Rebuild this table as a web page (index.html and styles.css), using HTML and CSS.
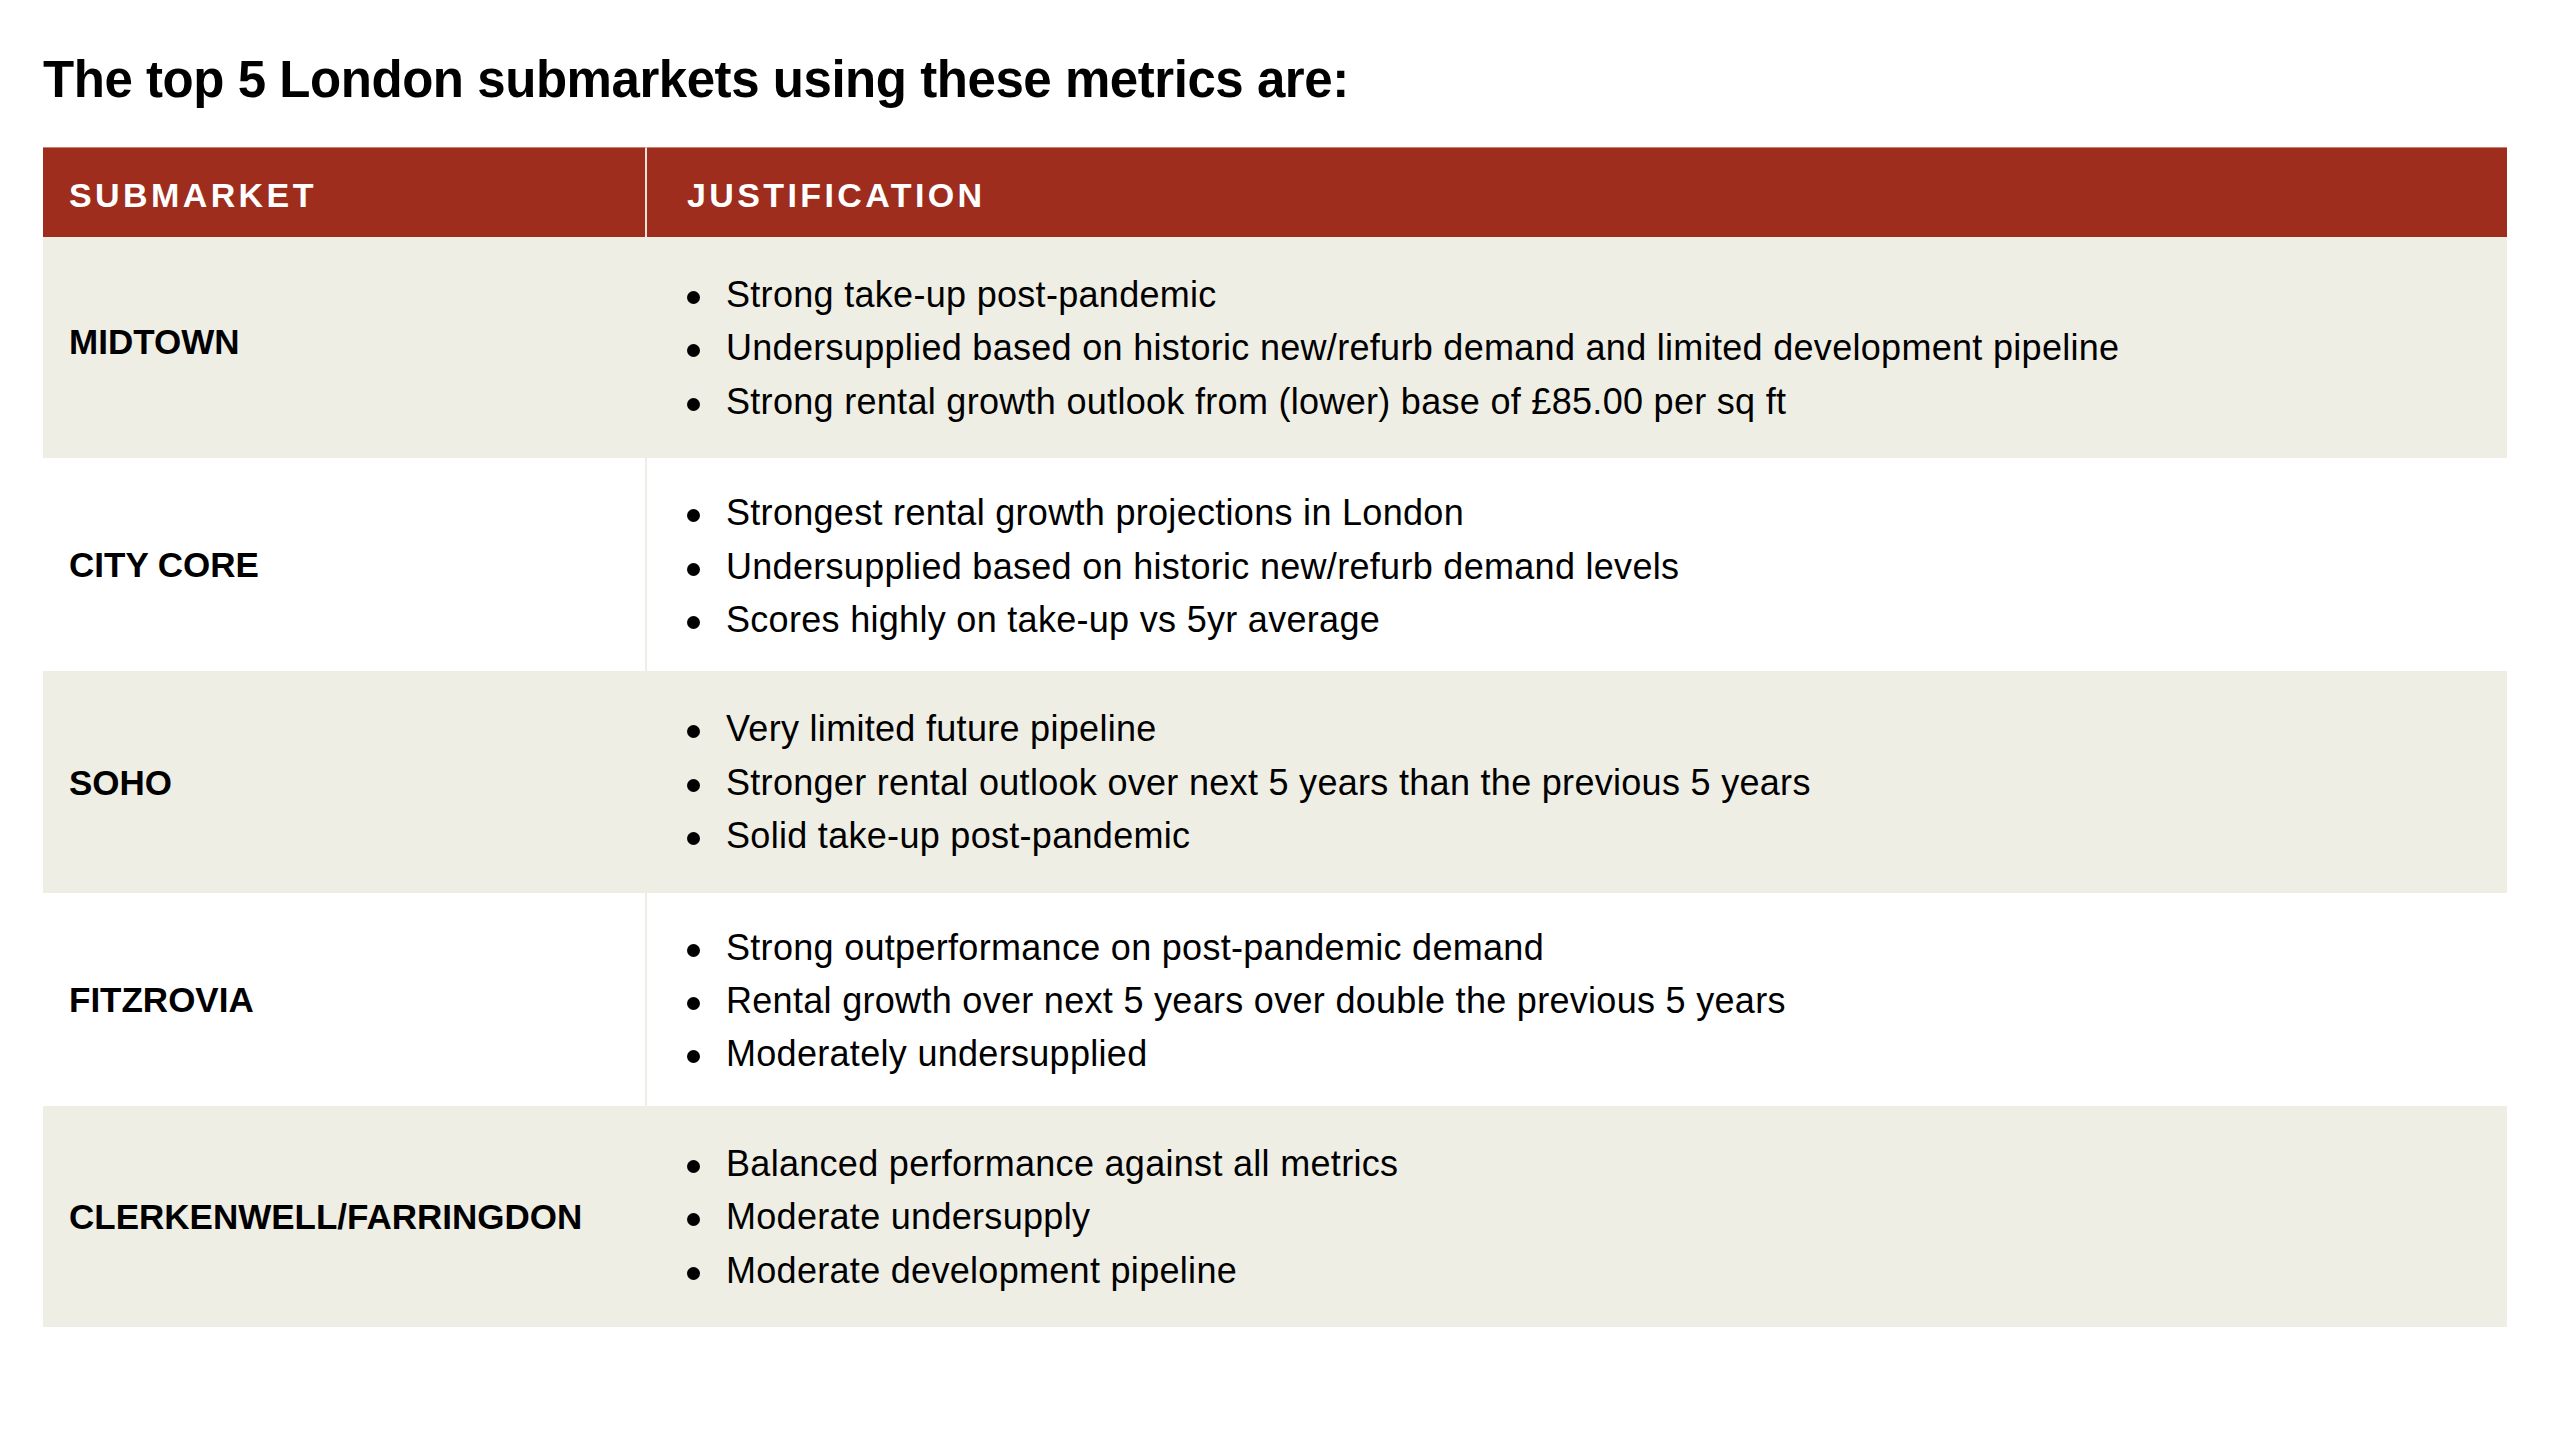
FILE: index.html
```html
<!DOCTYPE html>
<html lang="en">
<head>
<meta charset="utf-8">
<title>Top 5 London submarkets</title>
<link rel="stylesheet" href="styles.css">
</head>
<body>
<main class="page">
  <h1 class="title">The top 5 London submarkets using these metrics are:</h1>
  <table class="markets">
    <thead>
      <tr>
        <th class="col-sub">SUBMARKET</th>
        <th class="col-just">JUSTIFICATION</th>
      </tr>
    </thead>
    <tbody>
      <tr class="row-tint">
        <td class="name name-up">MIDTOWN</td>
        <td class="just">
          <ul class="points">
            <li>Strong take-up post-pandemic</li>
            <li>Undersupplied based on historic new/refurb demand and limited development pipeline</li>
            <li>Strong rental growth outlook from (lower) base of £85.00 per sq ft</li>
          </ul>
        </td>
      </tr>
      <tr class="row-plain">
        <td class="name">CITY CORE</td>
        <td class="just">
          <ul class="points">
            <li>Strongest rental growth projections in London</li>
            <li>Undersupplied based on historic new/refurb demand levels</li>
            <li>Scores highly on take-up vs 5yr average</li>
          </ul>
        </td>
      </tr>
      <tr class="row-tint">
        <td class="name">SOHO</td>
        <td class="just">
          <ul class="points">
            <li>Very limited future pipeline</li>
            <li>Stronger rental outlook over next 5 years than the previous 5 years</li>
            <li>Solid take-up post-pandemic</li>
          </ul>
        </td>
      </tr>
      <tr class="row-plain">
        <td class="name">FITZROVIA</td>
        <td class="just">
          <ul class="points">
            <li>Strong outperformance on post-pandemic demand</li>
            <li>Rental growth over next 5 years over double the previous 5 years</li>
            <li>Moderately undersupplied</li>
          </ul>
        </td>
      </tr>
      <tr class="row-tint">
        <td class="name">CLERKENWELL/FARRINGDON</td>
        <td class="just">
          <ul class="points">
            <li>Balanced performance against all metrics</li>
            <li>Moderate undersupply</li>
            <li>Moderate development pipeline</li>
          </ul>
        </td>
      </tr>
    </tbody>
  </table>
</main>
</body>
</html>
```
FILE: styles.css
```css
* { box-sizing: border-box; }

html, body {
  margin: 0;
  padding: 0;
  background: #ffffff;
}

body {
  font-family: "Liberation Sans", Arial, Helvetica, sans-serif;
  color: #0d0d0d;
}

.page {
  padding: 54px 0 0 43px;
}

.title {
  margin: 0 0 42px 0;
  font-size: 51px;
  line-height: 51px;
  font-weight: 700;
  letter-spacing: -0.45px;
  color: #000;
}

.markets {
  width: 2464px;
  border-collapse: separate;
  border-spacing: 0;
  table-layout: fixed;
}

.markets th {
  background: #9e2d1e;
  color: #ffffff;
  font-size: 34px;
  line-height: 34px;
  font-weight: 700;
  letter-spacing: 3.4px;
  text-align: left;
  padding: 30px 0 25px 0;
  height: 89px;
  border-top: 1px solid #c9806f;
}

.markets th.col-sub {
  width: 604px;
  padding-left: 26px;
  border-right: 2px solid #eee3d8;
}

.markets th.col-just {
  padding-left: 40px;
}

.markets td {
  vertical-align: middle;
}

.row-tint td { background: #efeee4; }
.row-plain td { background: #ffffff; }

.markets td.name {
  padding-left: 26px;
  font-size: 35px;
  line-height: 35px;
  font-weight: 700;
  color: #000;
  border-right: 2px solid #efeee4;
}

.markets td.name-up {
  padding-bottom: 14px;
}

.markets td.just {
  padding-left: 40px;
}

.row-tint td.just { padding-top: 31px; padding-bottom: 30px; }
.row-plain td.just { padding-top: 28px; padding-bottom: 25px; }

.points {
  list-style: none;
  margin: 0;
  padding: 0;
}

.points li {
  display: flex;
  font-size: 36px;
  line-height: 53.4px;
  letter-spacing: 0.3px;
  color: #000;
}

.points li::before {
  content: "";
  flex: 0 0 13px;
  width: 13px;
  height: 13px;
  margin-top: 23px;
  margin-right: 26px;
  border-radius: 50%;
  background: #000;
}
```
